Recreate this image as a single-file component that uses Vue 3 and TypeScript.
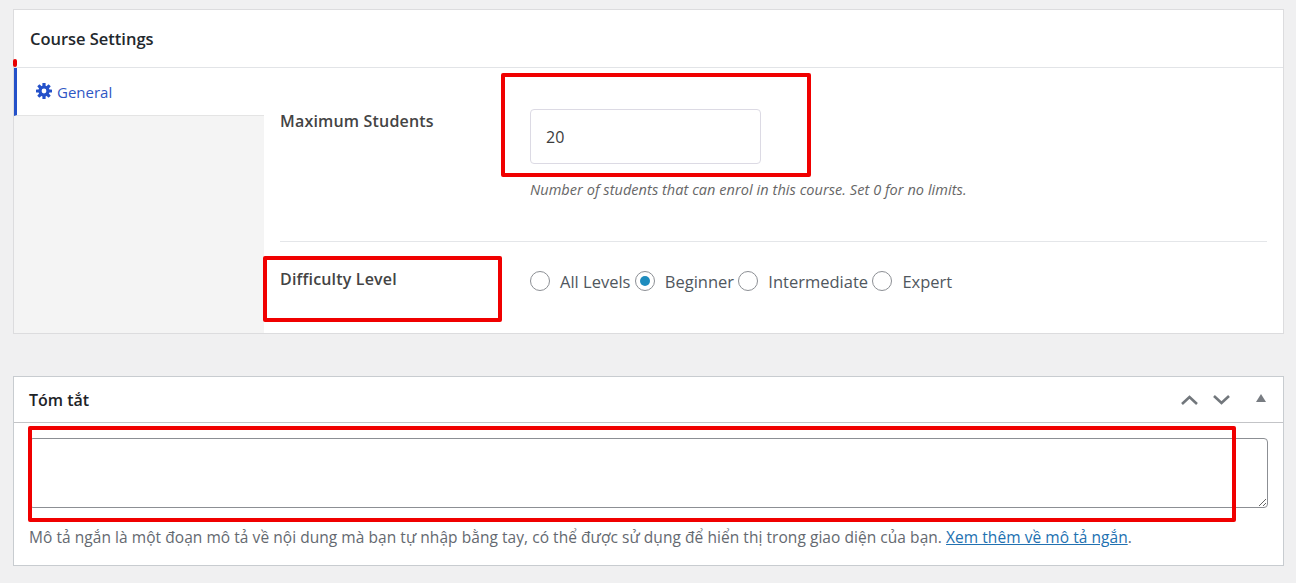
<template>
  <div class="page">
    <section class="box settings">
      <header class="settings-head">Course Settings</header>
      <div class="settings-body">
        <nav class="side">
          <a class="tab">
            <svg class="gear" viewBox="0 0 16 16" aria-hidden="true">
              <rect
                v-for="deg in teeth"
                :key="deg"
                x="6.4"
                y="0"
                width="3.2"
                height="4"
                rx="0.5"
                :transform="`rotate(${deg} 8 8)`"
              />
              <path fill-rule="evenodd" d="M8 2.4a5.6 5.6 0 1 1 0 11.2A5.6 5.6 0 0 1 8 2.4zm0 3.2a2.4 2.4 0 1 0 0 4.8 2.4 2.4 0 0 0 0-4.8z" />
            </svg>
            General
          </a>
        </nav>
        <div class="fields">
          <div class="field first">
            <label class="field-label">Maximum Students</label>
            <div class="field-control">
              <input class="num" type="text" value="20" />
              <p class="hint">Number of students that can enrol in this course. Set 0 for no limits.</p>
            </div>
          </div>
          <div class="field second">
            <label class="field-label">Difficulty Level</label>
            <div class="radios">
              <label v-for="lvl in levels" :key="lvl" class="radio">
                <span class="dot" :class="{ on: lvl === 'Beginner' }"></span>
                <span class="radio-text">{{ lvl }}</span>
              </label>
            </div>
          </div>
        </div>
      </div>
    </section>

    <section class="box excerpt">
      <header class="excerpt-head">
        <h2>Tóm tắt</h2>
        <div class="handles">
          <svg class="chev" viewBox="0 0 17 10"><path d="M1 9 8.5 2 16 9" /></svg>
          <svg class="chev" viewBox="0 0 17 10"><path d="M1 1l7.5 7L16 1" /></svg>
          <svg class="tri" viewBox="0 0 10 8"><path d="M5 0l5 8H0z" /></svg>
        </div>
      </header>
      <div class="excerpt-body">
        <textarea class="area"></textarea>
        <p class="desc">
          Mô tả ngắn là một đoạn mô tả về nội dung mà bạn tự nhập bằng tay, có thể được sử dụng để hiển thị trong giao diện của bạn.
          <a class="more">Xem thêm về mô tả ngắn</a>.
        </p>
      </div>
    </section>

    <!-- hand-drawn annotations on top of the screenshot -->
    <i class="mark m1"></i>
    <i class="mark m2"></i>
    <i class="mark m3"></i>
    <i class="tick"></i>
  </div>
</template>

<script setup lang="ts">
const levels: string[] = ['All Levels', 'Beginner', 'Intermediate', 'Expert']
const teeth: number[] = [0, 45, 90, 135, 180, 225, 270, 315]
</script>

<style>
html,
body {
  margin: 0;
  background: #f0f0f1;
}
</style>

<style scoped>
.page {
  position: relative;
  height: 583px;
  box-sizing: border-box;
  padding: 9px 12px 0 13px;
  overflow: hidden;
  background: #f0f0f1;
  font-family: 'Open Sans', 'Noto Sans', sans-serif;
  color: #3c434a;
}

.box {
  background: #fff;
  border: 1px solid #dcdcde;
  box-sizing: border-box;
}

.settings {
  height: 325px;
  display: flex;
  flex-direction: column;
}

.settings-head {
  height: 58px;
  flex: none;
  box-sizing: border-box;
  padding: 18px 0 0 16px;
  border-bottom: 1px solid #e2e4e7;
  font-size: 16.5px;
  line-height: 22px;
  font-weight: 600;
  letter-spacing: -0.02px;
  color: #23282d;
}

.settings-body {
  flex: 1;
  display: flex;
}

.side {
  width: 250px;
  flex: none;
  background: #f4f4f4;
}

.tab {
  height: 48px;
  box-sizing: border-box;
  display: flex;
  align-items: center;
  gap: 5px;
  padding: 0 0 0 19px;
  background: #fff;
  border-left: 3px solid #2451c9;
  border-bottom: 1px solid #e4e4e4;
  color: #2f57c4;
  font-size: 15px;
}

.gear {
  width: 16px;
  height: 16px;
  fill: #2451c9;
  margin-bottom: 1px;
}

.fields {
  flex: 1;
  padding: 0 16px;
  display: flex;
  flex-direction: column;
}

.field {
  display: flex;
}

.field.first {
  height: 174px;
  border-bottom: 1px solid #e4e6e9;
  padding-top: 41px;
  box-sizing: border-box;
}

.field.second {
  padding-top: 26px;
}

.field-label {
  width: 250px;
  flex: none;
  font-size: 16px;
  line-height: 22px;
  font-weight: 600;
  letter-spacing: 0.18px;
  color: #444;
}

.first .field-label {
  margin-top: 1px;
}

.num {
  display: block;
  width: 231px;
  height: 55px;
  box-sizing: border-box;
  padding: 0 15px;
  border: 1px solid #dcdae4;
  border-radius: 4px;
  background: #fff;
  font: 16px/22px 'Open Sans', 'Noto Sans', sans-serif;
  color: #3c3c3c;
  outline: none;
}

.hint {
  margin: 16px 0 0;
  font-size: 14.5px;
  line-height: 20px;
  font-style: italic;
  letter-spacing: 0.06px;
  color: #666;
}

.radios {
  display: flex;
  align-items: center;
  height: 26px;
}

.radio {
  display: flex;
  align-items: center;
}

.radio-text {
  margin-left: 10px;
  margin-right: 4.3px;
  font-size: 16.5px;
  color: #50575e;
}

.dot {
  width: 20px;
  height: 20px;
  box-sizing: border-box;
  border: 1px solid #8c8f94;
  border-radius: 50%;
  background: #fff;
  display: flex;
  align-items: center;
  justify-content: center;
}

.dot.on::before {
  content: '';
  width: 10px;
  height: 10px;
  border-radius: 50%;
  background: #1e8cbe;
}

.excerpt {
  margin-top: 42px;
  height: 190px;
  border-color: #c8ccd0;
}

.excerpt-head {
  height: 46px;
  box-sizing: border-box;
  display: flex;
  align-items: center;
  justify-content: space-between;
  border-bottom: 1px solid #c3c4c7;
  padding: 0 17px 0 15px;
}

.excerpt-head h2 {
  margin: 0;
  font-size: 16px;
  line-height: 22px;
  font-weight: 600;
  color: #1d2327;
}

.handles {
  display: flex;
  align-items: center;
}

.chev {
  width: 17px;
  height: 10px;
  margin-right: 15px;
  fill: none;
  stroke: #72777c;
  stroke-width: 2.6;
}

.tri {
  width: 10px;
  height: 8px;
  margin-left: 11px;
  margin-bottom: 3px;
  fill: #787c82;
}

.excerpt-body {
  padding: 15px 15px 0;
}

.area {
  display: block;
  width: 100%;
  height: 70px;
  box-sizing: border-box;
  border: 1px solid #8c8f94;
  border-radius: 4px;
  background: #fff;
  outline: none;
  margin: 0;
}

.desc {
  margin: 19px 0 0;
  font-size: 15.5px;
  line-height: 20px;
  letter-spacing: 0.05px;
  color: #646970;
}

.more {
  color: #2271b1;
  text-decoration: underline;
}

.mark {
  position: absolute;
  box-sizing: border-box;
  border: 4px solid #f00000;
  border-radius: 2px;
}

.m1 {
  left: 501px;
  top: 73px;
  width: 310px;
  height: 104px;
}

.m2 {
  left: 263px;
  top: 256px;
  width: 239px;
  height: 66px;
}

.m3 {
  left: 28px;
  top: 426px;
  width: 1208px;
  height: 96px;
}

.tick {
  position: absolute;
  left: 13px;
  top: 59px;
  width: 4px;
  height: 8px;
  border-radius: 2px;
  background: #e80000;
}
</style>
